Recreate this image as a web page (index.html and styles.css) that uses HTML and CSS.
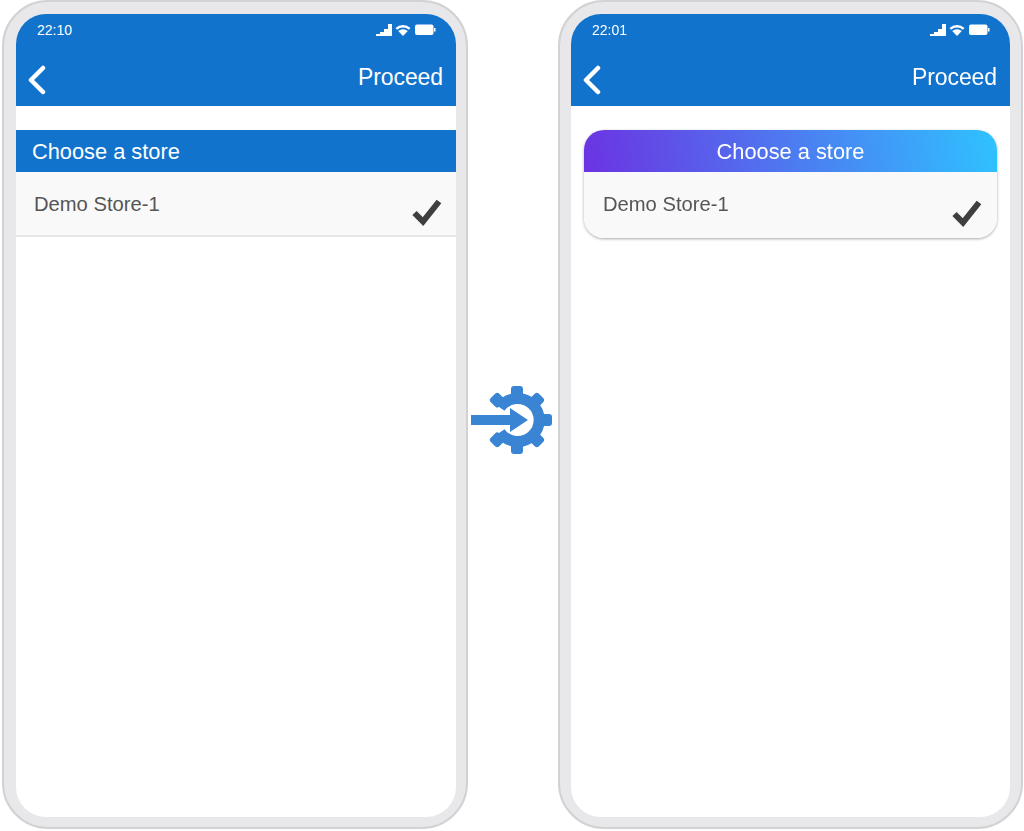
FILE: index.html
```html
<!DOCTYPE html>
<html lang="en">
<head>
    <meta charset="UTF-8">
    <meta name="viewport" content="width=device-width, initial-scale=1.0">
    <title>Choose a store</title>
    <link rel="stylesheet" href="styles.css">
</head>
<body>

<div class="compare">
    <div class="phone">
        <div class="screen">
            <div class="app-header">
                <div class="status-bar">
                    <span class="time">22:10</span>
                    <svg class="status-icons" viewBox="0 0 60 14" width="60" height="14">
                        <path d="M0 13v-2h4V9h4V6h4V1h4v12z" fill="#fff"/>
                        <path d="M19.5 5a11 11 0 0 1 15 0l-1.6 1.8a8.6 8.6 0 0 0-11.8 0z" fill="#fff"/>
                        <path d="M22.2 8a7.2 7.2 0 0 1 9.6 0L27 13z" fill="#fff"/>
                        <rect x="39" y="1.5" width="18.5" height="10.5" rx="2" fill="#fff"/>
                        <rect x="58" y="5" width="1.5" height="3.5" fill="#fff"/>
                    </svg>
                </div>
                <div class="nav-bar">
                    <svg class="back-icon" viewBox="0 0 20 30" width="20" height="30">
                        <polyline points="16,3 4,15 16,27" fill="none" stroke="#fff" stroke-width="4.5" stroke-linecap="round" stroke-linejoin="round"/>
                    </svg>
                    <span class="proceed">Proceed</span>
                </div>
            </div>
            <div class="store-list">
                <div class="list-title">Choose a store</div>
                <div class="store-row">
                    <span class="store-name">Demo Store-1</span>
                    <svg class="check-icon" viewBox="0 0 30 28" width="30" height="28">
                        <polyline points="2.5,15 11,23.5 27,3.5" fill="none" stroke="#3f3f3f" stroke-width="6"/>
                    </svg>
                </div>
            </div>
        </div>
    </div>

    <div class="middle">
        <svg class="gear-icon" viewBox="0 0 81 70" width="81" height="70">
            <g fill="#3a84d4">
                <rect x="40" y="1" width="12" height="12" rx="3"/>
                <rect x="40" y="57" width="12" height="12" rx="3"/>
                <rect x="69" y="29" width="12" height="12" rx="3"/>
                <rect x="40" y="1" width="12" height="12" rx="3" transform="rotate(45 46 35)"/>
                <rect x="40" y="1" width="12" height="12" rx="3" transform="rotate(135 46 35)"/>
                <rect x="40" y="1" width="12" height="12" rx="3" transform="rotate(-45 46 35)"/>
                <rect x="40" y="1" width="12" height="12" rx="3" transform="rotate(-135 46 35)"/>
            </g>
            <path d="M29 22.7A21.5 21.5 0 1 1 29 47.3" fill="none" stroke="#3a84d4" stroke-width="11"/>
            <polygon points="0,30 39,30 39,23 57,35 39,47 39,40 0,40" fill="#3a84d4"/>
        </svg>
    </div>

    <div class="phone phone-narrow">
        <div class="screen">
            <div class="app-header">
                <div class="status-bar">
                    <span class="time">22:01</span>
                    <svg class="status-icons" viewBox="0 0 60 14" width="60" height="14">
                        <path d="M0 13v-2h4V9h4V6h4V1h4v12z" fill="#fff"/>
                        <path d="M19.5 5a11 11 0 0 1 15 0l-1.6 1.8a8.6 8.6 0 0 0-11.8 0z" fill="#fff"/>
                        <path d="M22.2 8a7.2 7.2 0 0 1 9.6 0L27 13z" fill="#fff"/>
                        <rect x="39" y="1.5" width="18.5" height="10.5" rx="2" fill="#fff"/>
                        <rect x="58" y="5" width="1.5" height="3.5" fill="#fff"/>
                    </svg>
                </div>
                <div class="nav-bar">
                    <svg class="back-icon" viewBox="0 0 20 30" width="20" height="30">
                        <polyline points="16,3 4,15 16,27" fill="none" stroke="#fff" stroke-width="4.5" stroke-linecap="round" stroke-linejoin="round"/>
                    </svg>
                    <span class="proceed">Proceed</span>
                </div>
            </div>
            <div class="store-list store-card">
                <div class="list-title">Choose a store</div>
                <div class="store-row">
                    <span class="store-name">Demo Store-1</span>
                    <svg class="check-icon" viewBox="0 0 30 28" width="30" height="28">
                        <polyline points="2.5,15 11,23.5 27,3.5" fill="none" stroke="#3f3f3f" stroke-width="6"/>
                    </svg>
                </div>
            </div>
        </div>
    </div>
</div>

</body>
</html>
```

FILE: styles.css
```css
body {
    margin: 0;
    background: #fff;
    font-family: "Liberation Sans", Arial, sans-serif;
}
.compare {
    display: flex;
    align-items: flex-start;
    padding-left: 2px;
    filter: blur(0.4px);
}
.phone {
    box-sizing: border-box;
    flex: 0 0 466px;
    height: 829px;
    padding: 12px 10px 10px 12px;
    background: #e8e8ea;
    border: 2px solid #d2d2d4;
    border-radius: 46px;
}
.phone-narrow {
    flex-basis: 465px;
    padding-left: 11px;
    padding-right: 11px;
}
.screen {
    height: 100%;
    background: #fff;
    border-radius: 30px;
    overflow: hidden;
}
.app-header {
    background: #1273cc;
    color: #fff;
}
.status-bar {
    display: flex;
    align-items: center;
    justify-content: space-between;
    height: 32px;
    padding: 0 20px 0 21px;
}
.time {
    font-size: 14px;
}
.nav-bar {
    display: flex;
    align-items: center;
    justify-content: space-between;
    height: 60px;
    padding: 0 13px 0 11px;
}
.back-icon {
    margin-top: 7px;
}
.proceed {
    padding-top: 2px;
    font-size: 23px;
    letter-spacing: -0.1px;
}
.middle {
    flex: 0 0 90px;
    padding-top: 385px;
}
.gear-icon {
    display: block;
    margin-left: 3px;
}
.store-list {
    margin-top: 24px;
}
.list-title {
    height: 42px;
    line-height: 43px;
    padding-left: 16px;
    font-size: 21.8px;
    color: #fff;
    background: #1273cc;
}
.store-row {
    display: flex;
    justify-content: space-between;
    align-items: flex-end;
    box-sizing: border-box;
    height: 65px;
    padding: 0 14px 9px 18px;
    background: #f9f9f9;
    border-bottom: 2px solid #e6e6e6;
}
.store-name {
    align-self: flex-start;
    margin-top: 21px;
    font-size: 20.2px;
    color: #555;
}
.store-card {
    margin: 24px 13px 0;
    border-radius: 20px;
    overflow: hidden;
    box-shadow: 0 1px 3px rgba(0, 0, 0, 0.35);
}
.store-card .list-title {
    padding-left: 0;
    text-align: center;
    background: linear-gradient(80deg, #6b33e2, #2fc2ff);
}
.store-card .store-row {
    height: 66px;
    padding: 0 15px 11px 19px;
    border-bottom: none;
}
```
